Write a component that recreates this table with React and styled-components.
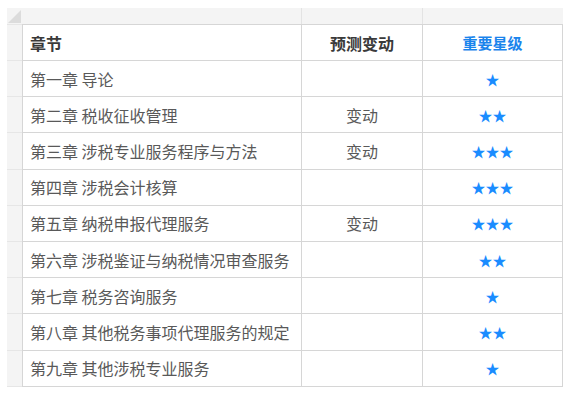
import styled, { createGlobalStyle } from 'styled-components'

const GlobalStyle = createGlobalStyle`
  body {
    margin: 0;
    background: #fff;
    font-family: 'Noto Sans CJK SC', 'Noto Sans', sans-serif;
  }
`

const chapters = [
  { name: '第一章 导论', change: '', stars: 1 },
  { name: '第二章 税收征收管理', change: '变动', stars: 2 },
  { name: '第三章 涉税专业服务程序与方法', change: '变动', stars: 3 },
  { name: '第四章 涉税会计核算', change: '', stars: 3 },
  { name: '第五章 纳税申报代理服务', change: '变动', stars: 3 },
  { name: '第六章 涉税鉴证与纳税情况审查服务', change: '', stars: 2 },
  { name: '第七章 税务咨询服务', change: '', stars: 1 },
  { name: '第八章 其他税务事项代理服务的规定', change: '', stars: 2 },
  { name: '第九章 其他涉税专业服务', change: '', stars: 1 },
]

const Sheet = styled.div`
  margin: 8px 0 0 7px;
  width: 556px;
  background: #f4f4f4;
  display: grid;
  grid-template-columns: 15px 280px 121px 140px;
  grid-template-rows: 16px 37px;
  grid-auto-rows: 36.2px;
`

const Corner = styled.div`
  display: flex;
  align-items: flex-end;
  justify-content: flex-end;
  padding: 0 1px 1px 0;
`

const ColHead = styled.div`
  border-right: ${(p) => (p.$divider ? '1px solid #e3e3e3' : 'none')};
`

const RowHead = styled.div`
  border-bottom: 1px solid #e6e6e6;
  border-top: ${(p) => (p.$first ? '1px solid #e6e6e6' : 'none')};
`

const Cell = styled.div`
  background: #fff;
  display: flex;
  align-items: center;
  justify-content: ${(p) => (p.$center ? 'center' : 'flex-start')};
  padding-left: ${(p) => (p.$center ? '0' : '7px')};
  border-right: 1px solid #d6d6d6;
  border-bottom: 1px solid #d6d6d6;
  border-left: ${(p) => (p.$first ? '1px solid #d6d6d6' : 'none')};
  border-top: ${(p) => (p.$top ? '1px solid #d6d6d6' : 'none')};
  font-size: 16px;
  color: #595959;
  white-space: nowrap;
`

const HeadText = styled.span`
  font-weight: bold;
  font-size: ${(p) => (p.$blue ? '15px' : '16px')};
  color: ${(p) => (p.$blue ? '#1a84ec' : '#3a3a3a')};
`

const Stars = styled.span`
  font-size: 14px;
  line-height: 1;
  color: #1a8cff;
  font-family: 'Noto Sans CJK SC', sans-serif;
`

function CornerMark() {
  return (
    <svg width="13" height="13" viewBox="0 0 13 13">
      <polygon points="13,0 13,13 0,13" fill="#dcdcdc" />
    </svg>
  )
}

export default function App() {
  return (
    <>
      <GlobalStyle />
      <Sheet>
        <Corner>
          <CornerMark />
        </Corner>
        <ColHead $divider />
        <ColHead $divider />
        <ColHead />

        <RowHead $first />
        <Cell $first $top>
          <HeadText>章节</HeadText>
        </Cell>
        <Cell $center $top>
          <HeadText>预测变动</HeadText>
        </Cell>
        <Cell $center $top>
          <HeadText $blue>重要星级</HeadText>
        </Cell>

        {chapters.map((c) => (
          <Row key={c.name} chapter={c} />
        ))}
      </Sheet>
    </>
  )
}

function Row({ chapter }) {
  return (
    <>
      <RowHead />
      <Cell $first>{chapter.name}</Cell>
      <Cell $center>{chapter.change}</Cell>
      <Cell $center>
        <Stars>{'★'.repeat(chapter.stars)}</Stars>
      </Cell>
    </>
  )
}
